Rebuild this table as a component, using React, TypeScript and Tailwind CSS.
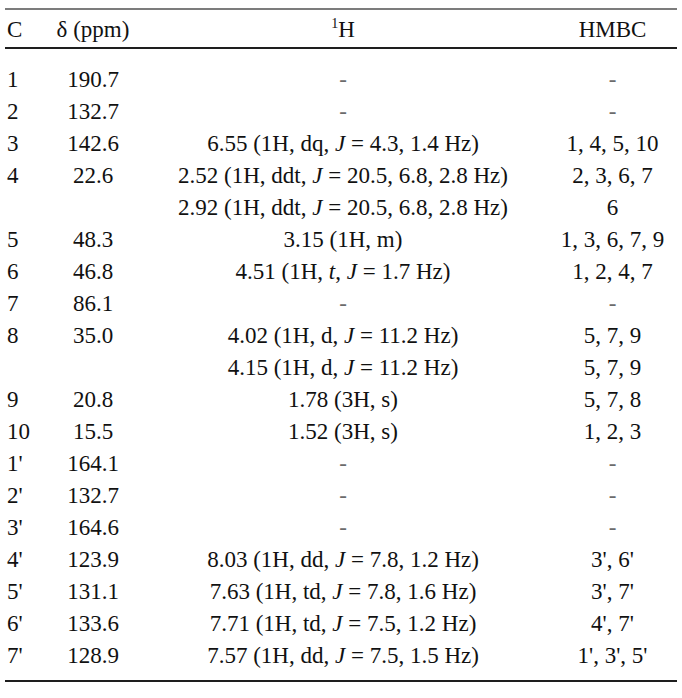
import type { ReactNode } from "react";

type Row = {
  c: string;
  d: string;
  h: ReactNode[];
  m: string[];
};

const J = (pre: string, post: string) => (
  <>
    {pre}
    <i>J</i> = {post}
  </>
);

const dash = <span className="text-[#6b6b6b]">-</span>;

const rows: Row[] = [
  { c: "1", d: "190.7", h: [dash], m: ["-"] },
  { c: "2", d: "132.7", h: [dash], m: ["-"] },
  { c: "3", d: "142.6", h: [J("6.55 (1H, dq, ", "4.3, 1.4 Hz)")], m: ["1, 4, 5, 10"] },
  {
    c: "4",
    d: "22.6",
    h: [J("2.52 (1H, ddt, ", "20.5, 6.8, 2.8 Hz)"), J("2.92 (1H, ddt, ", "20.5, 6.8, 2.8 Hz)")],
    m: ["2, 3, 6, 7", "6"],
  },
  { c: "5", d: "48.3", h: ["3.15 (1H, m)"], m: ["1, 3, 6, 7, 9"] },
  {
    c: "6",
    d: "46.8",
    h: [
      <>
        4.51 (1H, <i>t</i>, <i>J</i> = 1.7 Hz)
      </>,
    ],
    m: ["1, 2, 4, 7"],
  },
  { c: "7", d: "86.1", h: [dash], m: ["-"] },
  {
    c: "8",
    d: "35.0",
    h: [J("4.02 (1H, d, ", "11.2 Hz)"), J("4.15 (1H, d, ", "11.2 Hz)")],
    m: ["5, 7, 9", "5, 7, 9"],
  },
  { c: "9", d: "20.8", h: ["1.78 (3H, s)"], m: ["5, 7, 8"] },
  { c: "10", d: "15.5", h: ["1.52 (3H, s)"], m: ["1, 2, 3"] },
  { c: "1'", d: "164.1", h: [dash], m: ["-"] },
  { c: "2'", d: "132.7", h: [dash], m: ["-"] },
  { c: "3'", d: "164.6", h: [dash], m: ["-"] },
  { c: "4'", d: "123.9", h: [J("8.03 (1H, dd, ", "7.8, 1.2 Hz)")], m: ["3', 6'"] },
  { c: "5'", d: "131.1", h: [J("7.63 (1H, td, ", "7.8, 1.6 Hz)")], m: ["3', 7'"] },
  { c: "6'", d: "133.6", h: [J("7.71 (1H, td, ", "7.5, 1.2 Hz)")], m: ["4', 7'"] },
  { c: "7'", d: "128.9", h: [J("7.57 (1H, dd, ", "7.5, 1.5 Hz)")], m: ["1', 3', 5'"] },
];

const cols = "grid grid-cols-[43px_90px_410px_129px]";

export default function App() {
  return (
    <main className="min-h-screen bg-white pt-2 font-['Liberation_Serif',serif] text-[23px] text-[#111]">
      <div className="mx-[5px] w-[672px]">
        <div className="h-[2px] bg-[#7c7c7c]" />
        <div className={`${cols} pt-1 pb-px leading-[32px]`}>
          <div className="pl-[2px]">C</div>
          <div className="text-center">δ (ppm)</div>
          <div className="text-center">
            <span className="relative -top-[9px] text-[14px] leading-none">1</span>H
          </div>
          <div className="text-center">HMBC</div>
        </div>
        <div className="h-[2px] bg-[#1e1e1e]" />
        <div className="pt-[15px] pb-[8px] leading-[32px]">
          {rows.map((r) => (
            <div key={r.c} className={cols}>
              <div className="pl-[2px]">{r.c}</div>
              <div className="text-center">{r.d}</div>
              <div className="flex flex-col items-center">
                {r.h.map((t, i) => (
                  <div key={i}>{t}</div>
                ))}
              </div>
              <div className="flex flex-col items-center">
                {r.m.map((t, i) => (
                  <div key={i} className={t === "-" ? "text-[#6b6b6b]" : ""}>
                    {t}
                  </div>
                ))}
              </div>
            </div>
          ))}
        </div>
        <div className="h-[2px] bg-[#1e1e1e]" />
      </div>
    </main>
  );
}
